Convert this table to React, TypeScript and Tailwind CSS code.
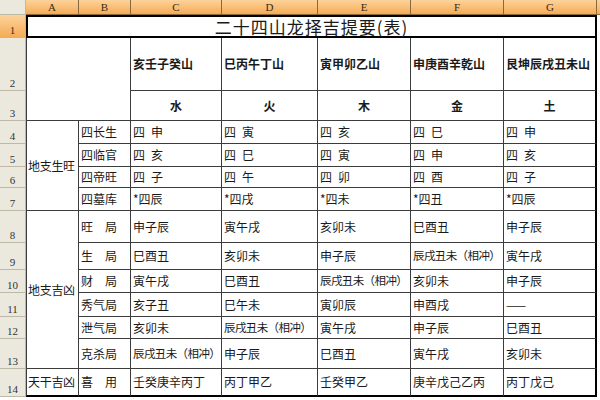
import React from 'react';

const colLetters = ['A', 'B', 'C', 'D', 'E', 'F', 'G'];

const mountains = ['亥壬子癸山', '巳丙午丁山', '寅甲卯乙山', '申庚酉辛乾山', '艮坤辰戌丑未山'];
const elements = ['水', '火', '木', '金', '土'];

// rows 4..14: label in column B, then C..G
const body: { label: string; cells: string[] }[] = [
  { label: '四长生', cells: ['四\u2002申', '四\u2002寅', '四\u2002亥', '四\u2002巳', '四\u2002申'] },
  { label: '四临官', cells: ['四\u2002亥', '四\u2002巳', '四\u2002寅', '四\u2002申', '四\u2002亥'] },
  { label: '四帝旺', cells: ['四\u2002子', '四\u2002午', '四\u2002卯', '四\u2002酉', '四\u2002子'] },
  { label: '四墓库', cells: ['*四辰', '*四戌', '*四未', '*四丑', '*四辰'] },
  { label: '旺\u2002\u2002局', cells: ['申子辰', '寅午戌', '亥卯未', '巳酉丑', '申子辰'] },
  { label: '生\u2002\u2002局', cells: ['巳酉丑', '亥卯未', '申子辰', '辰戌丑未（相冲）', '寅午戌'] },
  { label: '财\u2002\u2002局', cells: ['寅午戌', '巳酉丑', '辰戌丑未（相冲）', '亥卯未', '申子辰'] },
  { label: '秀气局', cells: ['亥子丑', '巳午未', '寅卯辰', '申酉戌', '——'] },
  { label: '泄气局', cells: ['亥卯未', '辰戌丑未（相冲）', '寅午戌', '申子辰', '巳酉丑'] },
  { label: '克杀局', cells: ['辰戌丑未（相冲）', '申子辰', '巳酉丑', '寅午戌', '亥卯未'] },
  { label: '喜\u2002\u2002用', cells: ['壬癸庚辛丙丁', '丙丁甲乙', '壬癸甲乙', '庚辛戊己乙丙', '丙丁戊己'] },
];

const RowHeader: React.FC<{ n: number; active?: boolean }> = ({ n, active }) => (
  <div
    className={
      'flex items-end justify-center pb-px text-[11px] leading-none text-[#333] font-["Liberation_Serif",serif] border-r border-b border-[#bdb9a6] ' +
      (active ? 'bg-gradient-to-b from-[#fcd39a] to-[#f5ab55]' : 'bg-[#ebe9de]')
    }
  >
    {n}
  </div>
);

const App: React.FC = () => {
  return (
    <div className="w-[600px] h-[400px] overflow-hidden bg-white font-['Noto_Sans_CJK_SC',sans-serif] text-[#1a1a1a]">
      <div className="grid grid-cols-[26px_53px_52px_91px_96px_93px_93px_93px_3px] grid-rows-[15px_23px_53px_30px_23px_23px_21px_23px_32px_27px_23px_24px_22px_30px_28px]">
        {/* column headers */}
        <div className="bg-[#ebe9de] border-r border-b border-[#bdb9a6]" />
        {colLetters.map((c) => (
          <div
            key={c}
            className="flex items-center justify-center text-[11px] leading-none text-[#3a2a10] font-['Liberation_Serif',serif] bg-gradient-to-b from-[#fcd39a] to-[#f5ab55] border-r border-b border-[#8a6a3a]"
          >
            {c}
          </div>
        ))}
        <div className="bg-gradient-to-b from-[#fcd39a] to-[#f5ab55] border-b border-[#8a6a3a]" />

        {/* row 1: title */}
        <RowHeader n={1} active />
        <div className="col-span-7 flex items-center justify-center border-2 border-black text-[17px] leading-none tracking-[1px]">
          二十四山龙择吉提要(表)
        </div>
        <div />

        {/* row 2: mountains */}
        <RowHeader n={2} />
        <div className="col-span-2 row-span-2 border-l border-r border-b border-[#3c3c3c]" />
        {mountains.map((m, i) => (
          <div
            key={m}
            className={
              'flex items-center pl-[2px] text-[12px] font-bold whitespace-nowrap overflow-hidden border-b border-[#3c3c3c] ' +
              (i === 4 ? 'border-r-2 border-r-black' : 'border-r')
            }
          >
            {m}
          </div>
        ))}
        <div />

        {/* row 3: elements */}
        <RowHeader n={3} />
        {elements.map((e, i) => (
          <div
            key={e}
            className={
              'flex items-center justify-center text-[12px] font-bold border-b border-[#3c3c3c] ' +
              (i === 4 ? 'border-r-2 border-r-black' : 'border-r')
            }
          >
            {e}
          </div>
        ))}
        <div />

        {body.map((row, r) => {
          const n = r + 4;
          const last = n === 14;
          const bottom = last ? 'border-b-2 border-b-black' : 'border-b';
          return (
            <React.Fragment key={n}>
              <RowHeader n={n} />
              {r === 0 && (
                <div className="row-span-4 flex items-center pl-[1px] text-[12px] tracking-[-0.3px] whitespace-nowrap border-l border-r border-b border-[#3c3c3c]">
                  地支生旺
                </div>
              )}
              {r === 4 && (
                <div className="row-span-6 flex items-center pl-[1px] text-[12px] tracking-[-0.3px] whitespace-nowrap border-l border-r border-b border-[#3c3c3c]">
                  地支吉凶
                </div>
              )}
              {r === 10 && (
                <div className="flex items-center pl-[1px] text-[12px] tracking-[-0.3px] whitespace-nowrap border-l border-r border-b-2 border-[#3c3c3c] border-b-black">
                  天干吉凶
                </div>
              )}
              <div className={'flex items-center pl-[2px] text-[12px] whitespace-pre border-r border-[#3c3c3c] ' + bottom}>
                {row.label}
              </div>
              {row.cells.map((t, i) => (
                <div
                  key={i}
                  className={
                    'flex items-center pl-[2px] whitespace-pre overflow-hidden border-[#3c3c3c] ' +
                    bottom +
                    ' ' +
                    (i === 4 ? 'border-r-2 border-r-black' : 'border-r') +
                    ' ' +
                    (t.includes('（') ? 'text-[11.5px] tracking-[-0.6px]' : 'text-[12px]')
                  }
                >
                  {t}
                </div>
              ))}
              <div />
            </React.Fragment>
          );
        })}
      </div>
    </div>
  );
};

export default App;
